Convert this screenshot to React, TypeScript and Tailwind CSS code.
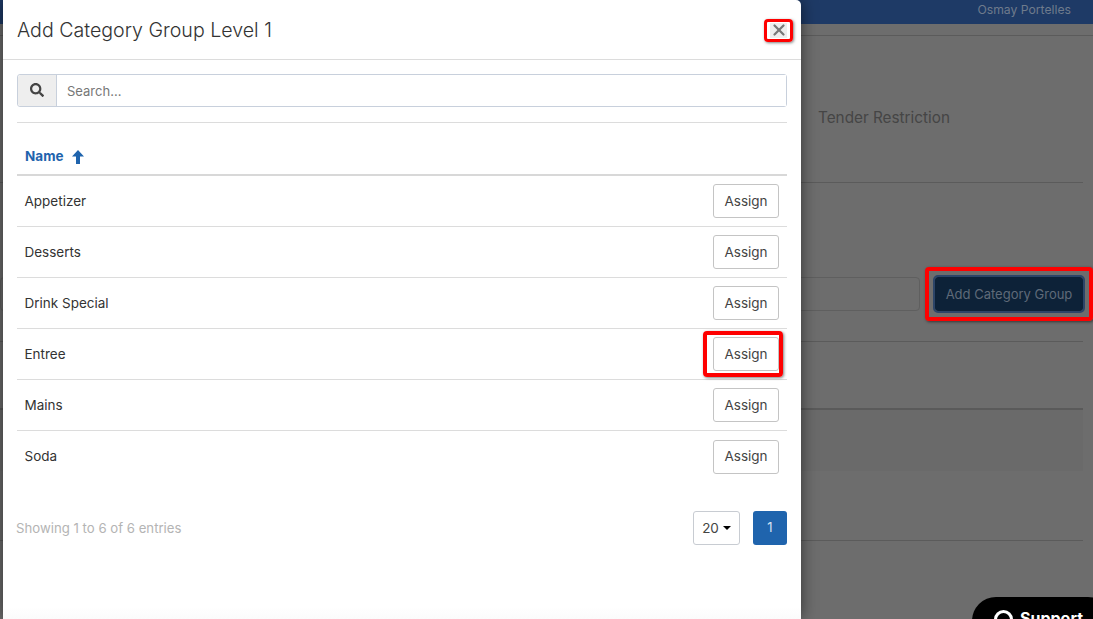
import { FaSearch } from "react-icons/fa";
import { X } from "lucide-react";

const categories = ["Appetizer", "Desserts", "Drink Special", "Entree", "Mains", "Soda"];

function BackgroundPage() {
  return (
    <div className="h-full w-full bg-[#6d6d6d]">
      <div className="flex h-6 items-center justify-end bg-[#1e3a66] pb-[3px] pr-[22px] text-[12.2px] text-[#6f7b8c]">
        Osmay Portelles
      </div>
      <div className="mt-[11px] border-t border-[#5b5b5b] pr-[10px]">
        <div className="h-[147px] border-b border-[#5b5b5b] pl-[818px] pt-[72px] text-[15.3px] leading-5 text-[#454545]">
          Tender Restriction
        </div>
        <div className="flex h-[159px] items-start gap-[15px] border-b border-[#5b5b5b] pt-[94px]">
          <div className="h-[34px] flex-1 rounded border border-[#5f5f5f]" />
          <button className="relative h-[34px] w-[148px] rounded-[3px] bg-[#0d2238] pt-[1px] text-[13px] text-[#5f6a78] outline-2 outline-[#2c4568]">
            Add Category Group
            <span className="absolute -inset-x-[10px] -inset-y-[10px] rounded-[4px] border-[4px] border-[#fe0000] shadow-[1px_1px_3px_rgba(0,0,0,0.5)]" />
          </button>
        </div>
        <div className="mt-[66px] h-[63px] border-t-2 border-[#5a5a5a] bg-[#6a6a6a]" />
        <div className="h-[70px] border-b border-[#5b5b5b]" />
      </div>
    </div>
  );
}

function AssignRow({ name, marked, last }: { name: string; marked: boolean; last: boolean }) {
  return (
    <div className={last ? "flex h-[51px] items-center justify-between pl-[7.5px] pr-2" : "flex h-[51px] items-center justify-between border-b border-[#dcdcdc] pl-[7.5px] pr-2"}>
      <span className="text-[13.5px] text-[#333]">{name}</span>
      <button className="relative h-[34px] w-[66px] rounded-[3px] border border-[#c4c4c4] bg-white text-[13.5px] text-[#444]">
        Assign
        {marked && (
          <span className="absolute -left-[11px] -right-[5px] -inset-y-[7px] rounded-[4px] border-[4px] border-[#fe0000] shadow-[1px_1px_3px_rgba(0,0,0,0.5)]" />
        )}
      </button>
    </div>
  );
}

export default function App() {
  return (
    <div className="relative h-[619px] w-[1093px] overflow-hidden font-['Inter',sans-serif]">
      <BackgroundPage />

      {/* Support launcher */}
      <div className="absolute left-[972px] top-[597px] flex h-[50px] w-[140px] items-start gap-[7px] rounded-t-[24px] bg-black pl-[22px] pt-[11px] text-[16px] font-bold leading-5 text-white">
        <span className="mt-[2px] h-[19px] w-[19px] rounded-full border-[3px] border-white" />
        Support
      </div>

      {/* Modal */}
      <div className="absolute left-[3px] top-0 h-[619px] w-[798px] rounded-tr-[5px] bg-gradient-to-b from-white from-[98%] to-[#fbfbfb] shadow-[0_0_16px_rgba(0,0,0,0.55)]">
        <div className="flex h-[60px] items-center justify-between border-b border-[#dcdcdc] pl-[14px] pr-[14px]">
          <h2 className="pt-[2px] text-[19.6px] font-light text-[#333]">Add Category Group Level 1</h2>
          <button className="relative mt-[1px] flex h-[15px] w-[17px] items-center justify-center bg-[#eee] text-[#777]">
            <X className="h-[18px] w-[18px] shrink-0" strokeWidth={3} />
            <span className="absolute -inset-x-[6px] -inset-y-[4px] rounded-[4px] border-[3px] border-[#fe0000] shadow-[1px_1px_3px_rgba(0,0,0,0.5)]" />
          </button>
        </div>

        <div className="px-[14px]">
          <div className="mt-[14px] flex h-[33px] rounded-[3px] border border-[#c8d0dc]">
            <span className="flex w-[39px] items-center justify-center rounded-l-[3px] border-r border-[#c8d0dc] bg-[#eee] text-[#444]">
              <FaSearch className="mb-[2px] h-[14px] w-[14px]" />
            </span>
            <input
              placeholder="Search..."
              className="flex-1 bg-white px-[10px] pt-[2px] text-[13px] text-[#333] outline-none placeholder:text-[#777]"
            />
          </div>
          <div className="mt-[15px] border-t border-[#dcdcdc]" />

          <div className="flex h-[53px] items-center gap-[8px] border-b-2 border-[#d8d8d8] pl-2 pt-[16px] text-[13.5px] font-bold text-[#1f64ad]">
            Name
            <svg viewBox="0 0 12 14" className="h-[14px] w-[12px]" fill="currentColor">
              <path d="M6 0 L12 6.5 H8 V14 H4 V6.5 H0 Z" />
            </svg>
          </div>

          {categories.map((name, i) => (
            <AssignRow key={name} name={name} marked={name === "Entree"} last={i === categories.length - 1} />
          ))}

          <div className="mt-[29px] flex items-center justify-between">
            <span className="-ml-[1px] pt-[1px] text-[13.2px] text-[#b4b4b4]">Showing 1 to 6 of 6 entries</span>
            <div className="flex items-center gap-[13px]">
              <button className="flex h-[34px] w-[47px] items-center justify-center gap-[4px] rounded-[3px] border border-[#c8ccd2] text-[13.5px] text-[#444]">
                20
                <span className="h-0 w-0 border-x-[4px] border-t-[4px] border-x-transparent border-t-black" />
              </button>
              <button className="h-[34px] w-[34px] rounded-[3px] bg-[#1f64ad] text-[13px] text-[#d5e4f3]">1</button>
            </div>
          </div>
        </div>
      </div>
    </div>
  );
}
